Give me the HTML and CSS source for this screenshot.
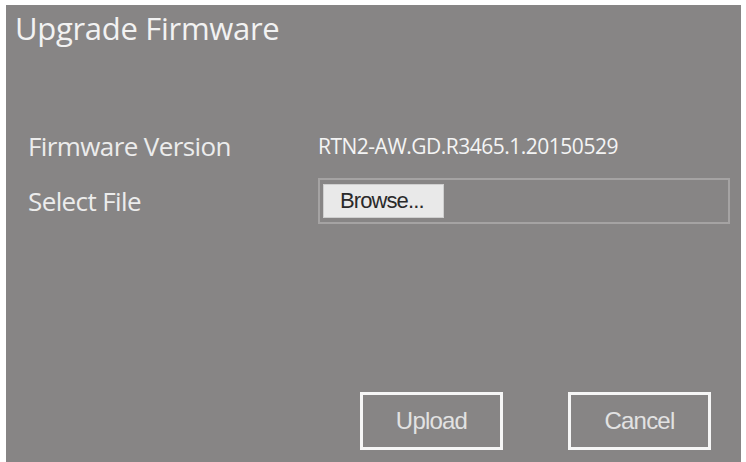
FILE: index.html
```html
<!DOCTYPE html>
<html lang="en">
<head>
    <meta charset="UTF-8">
    <meta name="viewport" content="width=device-width, initial-scale=1.0">
    <title>Upgrade Firmware</title>
    <link rel="stylesheet" href="styles.css">
</head>
<body>
<div class="dialog">
    <div class="dialog-title">Upgrade Firmware</div>

    <div class="form">
        <div class="row">
            <div class="label">Firmware Version</div>
            <div class="value">RTN2-AW.GD.R3465.1.20150529</div>
        </div>
        <div class="row">
            <div class="label">Select File</div>
            <div class="file-box">
                <button class="browse">Browse...</button>
            </div>
        </div>
    </div>

    <div class="actions">
        <button class="btn">Upload</button>
        <button class="btn">Cancel</button>
    </div>
</div>
</body>
</html>
```

FILE: styles.css
```css
body {
    margin: 0;
    background-color: #ffffff;
    font-family: "Open Sans", Arial, sans-serif;
}

.dialog {
    margin: 5px 5px 0 6px;
    height: 457px;
    background-color: #878585;
    display: flex;
    flex-direction: column;
    box-sizing: border-box;
    padding: 5px 0 0 0;
}

.dialog-title {
    color: #f2f2f2;
    font-size: 31px;
    line-height: 36px;
    padding-left: 9px;
    letter-spacing: -0.3px;
}

.form {
    margin-top: 85px;
    display: flex;
    flex-direction: column;
    gap: 17px;
}

.row {
    display: flex;
    align-items: center;
    height: 46px;
}

.row:first-child {
    height: 30px;
}

.label {
    width: 290px;
    padding-left: 22px;
    color: #ececec;
    font-size: 26px;
    letter-spacing: -0.6px;
}

.value {
    color: #f4f4f4;
    font-size: 21px;
    letter-spacing: -0.5px;
}

.file-box {
    width: 405px;
    height: 42px;
    border: 2px solid #a5a3a3;
    display: flex;
    align-items: center;
    padding-left: 3px;
}

.browse {
    width: 121px;
    height: 34px;
    background-color: #e9e9e9;
    border: 1px solid #cfcfcf;
    font-family: "Liberation Sans", Arial, sans-serif;
    font-size: 22px;
    color: #2a2a2a;
    text-align: left;
    padding: 0 0 0 16px;
    letter-spacing: -0.9px;
}

.actions {
    margin-top: auto;
    margin-bottom: 12px;
    display: flex;
    gap: 65px;
    padding-left: 354px;
}

.btn {
    width: 143px;
    height: 58px;
    background-color: transparent;
    border: 3px solid #f6f6f6;
    color: #e2e2e2;
    font-family: "Liberation Sans", Arial, sans-serif;
    font-size: 24px;
    letter-spacing: -0.8px;
}
```
